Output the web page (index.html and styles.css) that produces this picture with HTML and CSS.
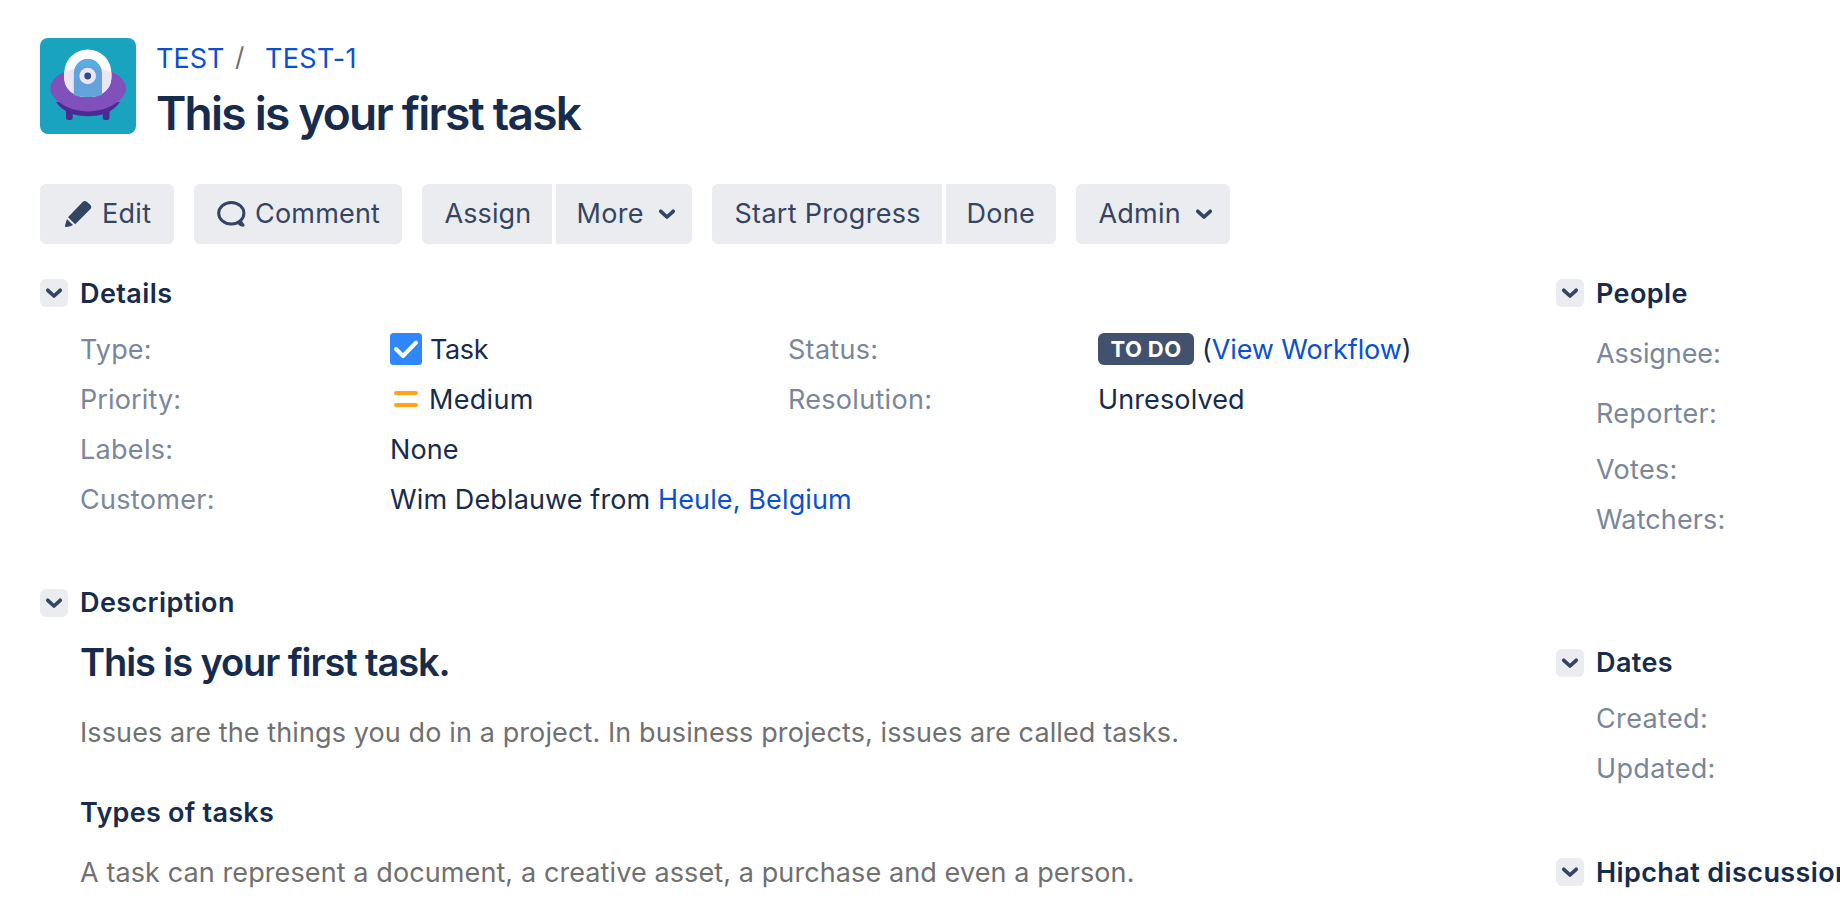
FILE: index.html
```html
<!DOCTYPE html>
<html lang="en">
<head>
<meta charset="utf-8">
<title>TEST-1 This is your first task</title>
<link rel="stylesheet" href="styles.css">
</head>
<body>
<svg width="0" height="0" class="defs" aria-hidden="true">
  <symbol id="chevron" viewBox="0 0 28 28"><path d="M7.8 11.300 14 17 20.200 11.300" fill="none" stroke="currentColor" stroke-width="3.700" stroke-linecap="round" stroke-linejoin="round"/></symbol>
</svg>
<header class="issue-header">
  <svg class="avatar" viewBox="0 0 96 96" aria-hidden="true">
    <rect width="96" height="96" rx="8" fill="#1aa3bf"/>
    <path d="M16 64H80C73 74 61 78.3 48 78.3S23 74 16 64Z" fill="#4c2a94"/>
    <path d="M26 70h6.7v9.5a2.5 2.5 0 0 1-2.5 2.5h-1.7a2.5 2.5 0 0 1-2.5-2.5ZM62.8 70h6.7v9.5a2.5 2.5 0 0 1-2.5 2.5h-1.7a2.5 2.5 0 0 1-2.5-2.5Z" fill="#4c2a94"/>
    <path d="M10.3 51C10.3 38 28 29.3 48 29.3S86 38 86 51C86 60 70 73.4 48 73.4S10.3 60 10.3 51Z" fill="#8050bb"/>
    <path d="M24.2 35a23.6 23.6 0 0 1 47.2 0v4c0 12-9 20-23.6 20s-23.6-8-23.6-20Z" fill="#fff"/>
    <path d="M24.2 34.5C30.5 31 39 29.3 47.8 29.3S65.1 31 71.4 34.5V39c0 12-9 20-23.6 20s-23.6-8-23.6-20Z" fill="#ece5f6"/>
    <path d="M33.8 57V35.2a14.1 14.1 0 0 1 28.2 0V57c-4 1.4-8.7 2-14.1 2s-10-.6-14.1-2Z" fill="#63a2db"/>
    <path d="M35.2 29.7C37.4 24.5 42.3 21.1 47.9 21.1s10.5 3.4 12.7 8.6a60 60 0 0 0-25.4 0Z" fill="#5aaedf"/>
    <circle cx="47.7" cy="38" r="8.3" fill="#ece5f6"/>
    <circle cx="47.7" cy="38" r="3.4" fill="#2f4a86"/>
  </svg>
  <div class="heading">
    <nav class="breadcrumb"><a class="crumb-project">TEST</a><span class="slash">/</span><a class="crumb-key">TEST-1</a></nav>
    <h1>This is your first task</h1>
  </div>
</header>

<div class="toolbar">
  <div class="group">
    <button class="btn edit">
      <svg class="icon" viewBox="0 0 30 30" aria-hidden="true"><path d="M5 18.200 19.600 3Q21.700 1 23.800 2.800L27.200 5.700Q29.200 7.800 27.400 10L12.200 25.200ZM3.900 20 10 26.100Q8 27.400 3.500 28.100 1.700 28.200 2 26.400Z" fill="currentColor"/></svg>
      <span>Edit</span>
    </button>
  </div>
  <div class="group">
    <button class="btn comment">
      <svg class="icon" viewBox="0 0 30 30" aria-hidden="true"><ellipse cx="15.300" cy="14.200" rx="12.600" ry="10.800" fill="none" stroke="currentColor" stroke-width="3"/><path d="M21 24.500 25.200 20.800 28.500 25.800Q28.900 27.900 27 27.800 23.500 27.400 21 24.500Z" fill="currentColor"/></svg>
      <span>Comment</span>
    </button>
  </div>
  <div class="group">
    <button class="btn assign">Assign</button>
    <button class="btn more">More<svg class="caret" aria-hidden="true"><use href="#chevron"/></svg></button>
  </div>
  <div class="group">
    <button class="btn start">Start Progress</button>
    <button class="btn done">Done</button>
  </div>
  <div class="group">
    <button class="btn admin">Admin<svg class="caret" aria-hidden="true"><use href="#chevron"/></svg></button>
  </div>
</div>

<div class="columns">
  <main>
    <section>
      <h2 class="section-title"><svg class="toggle" aria-hidden="true"><use href="#chevron"/></svg>Details</h2>
      <dl class="details">
        <dt class="snug">Type:</dt>
        <dd><svg class="value-icon" viewBox="0 0 32 32" aria-hidden="true"><rect width="32" height="32" rx="3.500" fill="#2e87fb"/><path d="M6 16 13 23 26 9.700" fill="none" stroke="#fff" stroke-width="4" stroke-linecap="round" stroke-linejoin="round"/></svg><span class="task">Task</span></dd>
        <dt>Status:</dt>
        <dd><span class="lozenge">TO DO</span><span class="workflow">(<a>View Workflow</a>)</span></dd>
        <dt class="snug">Priority:</dt>
        <dd><svg class="value-icon" viewBox="0 0 32 32" aria-hidden="true"><path d="M6 10H26M6 22H26" stroke="#ffa31a" stroke-width="4" stroke-linecap="round"/></svg><span class="medium">Medium</span></dd>
        <dt>Resolution:</dt>
        <dd class="snug">Unresolved</dd>
        <dt>Labels:</dt>
        <dd class="wide snug">None</dd>
        <dt>Customer:</dt>
        <dd class="wide snug"><span>Wim Deblauwe from <a>Heule, Belgium</a></span></dd>
      </dl>
    </section>
    <section class="description">
      <h2 class="section-title"><svg class="toggle" aria-hidden="true"><use href="#chevron"/></svg>Description</h2>
      <div class="prose">
        <h3>This is your first task.</h3>
        <p>Issues are the things you do in a project. In business projects, issues are called tasks.</p>
        <h4>Types of tasks</h4>
        <p class="second">A task can represent a document, a creative asset, a purchase and even a person.</p>
      </div>
    </section>
  </main>
  <aside>
    <section>
      <h2 class="section-title"><svg class="toggle" aria-hidden="true"><use href="#chevron"/></svg>People</h2>
      <ul class="people">
        <li class="tall assignee">Assignee:</li>
        <li class="tall">Reporter:</li>
        <li class="votes">Votes:</li>
        <li class="watchers">Watchers:</li>
      </ul>
    </section>
    <section class="dates">
      <h2 class="section-title"><svg class="toggle" aria-hidden="true"><use href="#chevron"/></svg>Dates</h2>
      <ul>
        <li>Created:</li>
        <li>Updated:</li>
      </ul>
    </section>
    <section class="hipchat">
      <h2 class="section-title"><svg class="toggle" aria-hidden="true"><use href="#chevron"/></svg>Hipchat discussions</h2>
    </section>
  </aside>
</div>
</body>
</html>
```
FILE: styles.css
```css
* {
  box-sizing: border-box;
  margin: 0;
  padding: 0;
}

body {
  height: 900px;
  padding: 38px 0 0 40px;
  overflow: hidden;
  background: #fff;
  color: #172b4d;
  font: 400 27px/50px Inter, "Liberation Sans", sans-serif;
  letter-spacing: 0.3px;
  white-space: nowrap;
}

a {
  color: #0b50cf;
}

ul {
  list-style: none;
}

.defs {
  display: block;
}

/* Header */
.issue-header {
  display: flex;
  gap: 16px;
  height: 146px;
}

.avatar {
  width: 96px;
  height: 96px;
}

.heading {
  padding-top: 1px;
}

.breadcrumb {
  display: flex;
  line-height: 40px;
}

.crumb-project {
  width: 80px;
  padding-left: 4px;
  letter-spacing: 0;
}

.slash {
  width: 33px;
  padding-left: 3px;
  color: #707070;
  font-size: 26px;
  line-height: 35px;
}

.crumb-key {
  letter-spacing: 0.35px;
}

h1 {
  margin-top: 6px;
  padding-left: 4px;
  font-size: 46px;
  font-weight: 600;
  line-height: 56px;
  letter-spacing: -1.75px;
}

/* Toolbar */
.toolbar {
  display: flex;
  gap: 20px;
  height: 95px;
}

.group {
  display: flex;
  gap: 4px;
  height: 59.5px;
  border-radius: 6px;
  overflow: hidden;
}

.btn {
  display: flex;
  align-items: center;
  border: 0;
  background: #ebecf0;
  color: #344563;
  font: inherit;
  line-height: 59px;
  letter-spacing: 0.3px;
}

.icon {
  flex: none;
  width: 30px;
  height: 30px;
}

.caret {
  width: 28px;
  height: 28px;
}

.edit {
  width: 134px;
  gap: 9px;
  padding-left: 23px;
}

.comment {
  width: 208px;
  gap: 9px;
  padding-left: 22px;
  letter-spacing: 0.2px;
}

.assign {
  width: 130px;
  padding-left: 22.5px;
  letter-spacing: 0.1px;
}

.more {
  width: 136px;
  gap: 9.5px;
  padding-left: 20.5px;
}

.start {
  width: 230px;
  padding-left: 22.5px;
}

.done {
  width: 110px;
  padding-left: 20.5px;
}

.admin {
  width: 154px;
  gap: 9px;
  padding-left: 22.5px;
  letter-spacing: 0.2px;
}

/* Sections */
.columns {
  display: grid;
  grid-template-columns: 1516px 284px;
}

.section-title {
  display: flex;
  gap: 12px;
  height: 28px;
  font-size: 27px;
  font-weight: 600;
  line-height: 30px;
  letter-spacing: 0.4px;
}

.description .section-title,
.dates .section-title {
  line-height: 28px;
}

.toggle {
  flex: none;
  width: 28px;
  height: 28px;
  border-radius: 6px;
  background: #ebecf0;
  color: #344563;
}

.details {
  display: grid;
  grid-template-columns: 310px 398px 310px 1fr;
  margin-top: 17px;
  padding-left: 40px;
}

dt,
li {
  color: #7a869a;
}

dt,
dd {
  height: 50px;
  line-height: 52px;
}

dd {
  display: flex;
  align-items: flex-start;
}

.wide {
  grid-column: span 3;
}

.snug {
  letter-spacing: 0.12px;
}

.value-icon {
  width: 32px;
  height: 32px;
  margin: 9px 7px 0 0;
}

.task {
  padding-left: 1px;
  letter-spacing: -0.4px;
}

.medium {
  letter-spacing: 0.3px;
}

.lozenge {
  width: 96px;
  height: 32px;
  margin: 9px 8px 0 0;
  border-radius: 6px;
  background: #42526e;
  color: #fff;
  font-size: 22px;
  font-weight: 700;
  line-height: 32px;
  letter-spacing: 0.4px;
  text-align: center;
}

.workflow {
  letter-spacing: -0.1px;
}

/* Description */
.description {
  margin-top: 65px;
}

.prose {
  padding: 22px 0 0 40px;
  line-height: 36px;
}

h3 {
  font-size: 38px;
  font-weight: 600;
  line-height: 46px;
  letter-spacing: -1.09px;
}

.prose p {
  margin-top: 30px;
  color: #707070;
  letter-spacing: 0.11px;
}

h4 {
  margin-top: 44px;
  font-size: 27px;
  font-weight: 600;
  letter-spacing: 0.26px;
}

.prose .second {
  margin-top: 24px;
  letter-spacing: 0.1px;
}

/* Sidebar */
aside ul {
  margin-top: 17px;
  padding-left: 40px;
}

.tall {
  line-height: 60px;
}

.assignee {
  letter-spacing: -0.08px;
}

.votes {
  margin-top: 1px;
}

.watchers {
  letter-spacing: 0.12px;
}

.dates {
  margin-top: 103.5px;
}

.dates ul {
  letter-spacing: 0.35px;
}

.hipchat {
  margin-top: 64.5px;
}
```
